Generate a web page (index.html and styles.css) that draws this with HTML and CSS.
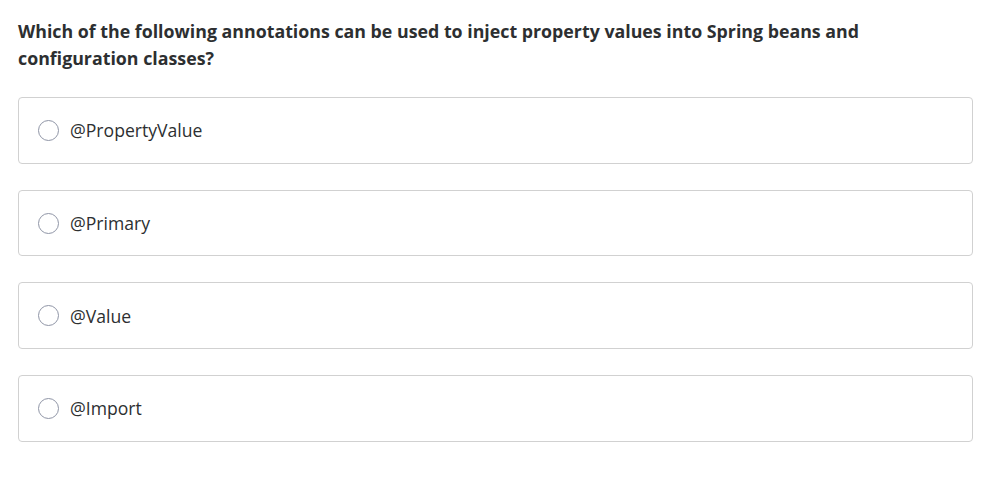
FILE: index.html
```html
<!DOCTYPE html>
<html>
<head>
<meta charset="utf-8">
<link rel="stylesheet" href="styles.css">
</head>
<body>
<div class="quiz">
  <h2 class="question">Which of the following annotations can be used to inject property values into Spring beans and configuration classes?</h2>
  <ul class="answers">
    <li class="answer"><span class="radio"></span><span class="label">@PropertyValue</span></li>
    <li class="answer"><span class="radio"></span><span class="label">@Primary</span></li>
    <li class="answer"><span class="radio"></span><span class="label">@Value</span></li>
    <li class="answer"><span class="radio"></span><span class="label">@Import</span></li>
  </ul>
</div>
</body>
</html>
```
FILE: styles.css
```css
* { box-sizing: border-box; }
html, body { margin: 0; padding: 0; background: #fff; }
body { font-family: "Open Sans", "Noto Sans", sans-serif; color: #2d2f31; }
.quiz { padding: 18px 20px 0 18px; }
.question {
  margin: 0;
  font-size: 17.8px;
  font-weight: 700;
  line-height: 27px;
  max-width: 900px;
  color: #2d2f31;
}
.answers {
  list-style: none;
  margin: 25px 0 0 0;
  padding: 0;
  display: flex;
  flex-direction: column;
  gap: 26px;
}
.answer {
  height: 66.7px;
  border: 1px solid #d1d1d1;
  border-radius: 4px;
  display: flex;
  align-items: center;
  padding-left: 19px;
}
.radio {
  width: 21px;
  height: 21px;
  border: 1.3px solid #8f95a6;
  border-radius: 50%;
  margin-right: 11px;
  flex: none;
}
.label {
  font-size: 17.6px;
  color: #2d2f31;
}
```
